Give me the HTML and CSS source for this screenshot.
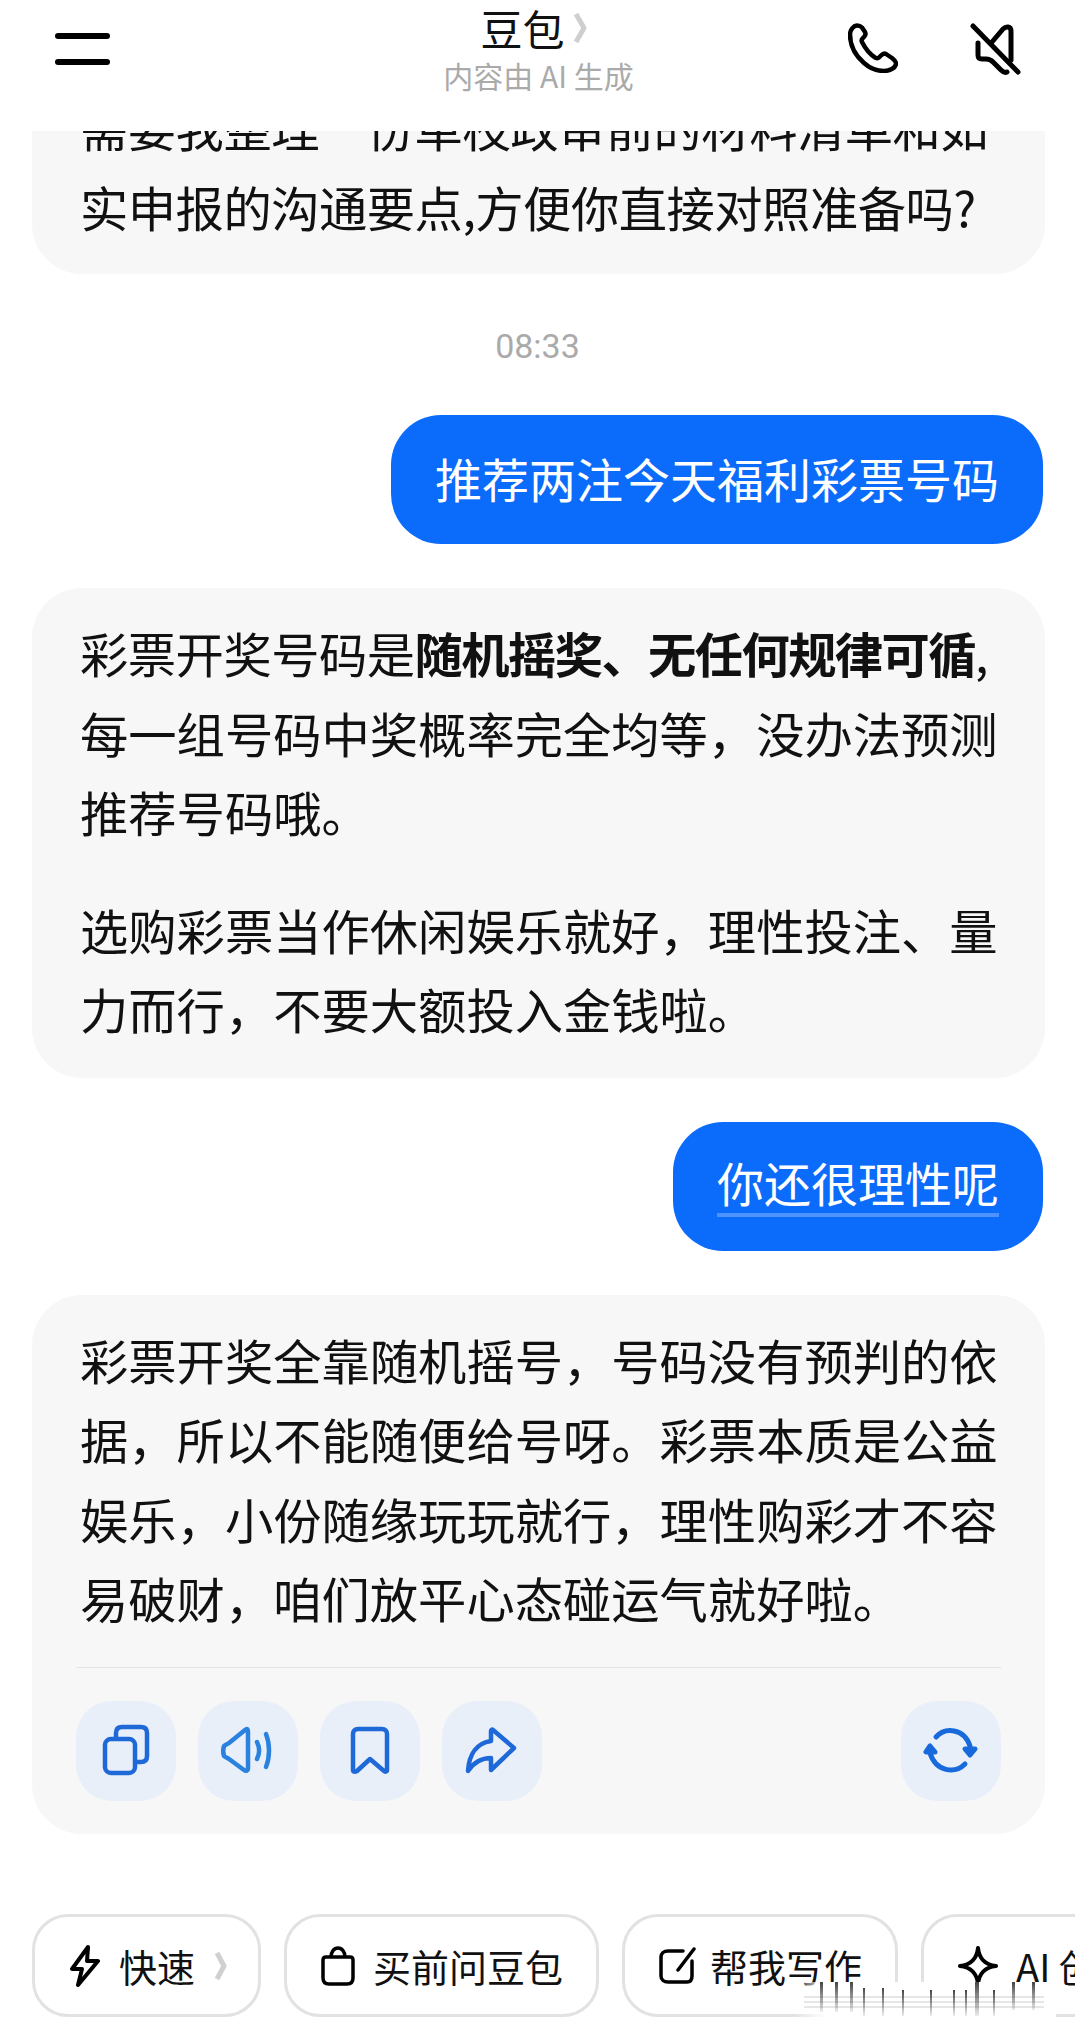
FILE: index.html
```html
<!DOCTYPE html>
<html lang="zh-CN">
<head>
  <meta charset="UTF-8">
  <title>豆包</title>
  <link rel="stylesheet" href="styles.css">
</head>
<body>
  <div class="page">
    <header class="top-bar">
      <div class="menu-btn"><span></span><span></span></div>
      <div class="title-box">
        <div class="title-row">
          <span class="title">豆包</span>
          <svg class="title-arrow" viewBox="0 0 14 32"><path d="M3 2l8 14-8 14" fill="none" stroke="#cfcfcf" stroke-width="5" stroke-linejoin="round"/></svg>
        </div>
        <div class="subtitle">内容由 AI 生成</div>
      </div>
      <div class="top-icons">
        <svg class="top-icon" viewBox="0 0 50 50"><path d="M9 2.500c-3 0-7 4-7 9C2 23 8 33 16 40c5 4.500 12 8 20 8 5 0 12-3 12-7.500 0-2-1.500-3.500-4-5.500l-6-4c-2-1-3.500 0-5 1.500l-2 2c-1 1-2 1-3.500.3C23 32 17 25 14 19c-.7-1.500-.5-2.500.5-3.500l1.500-1.500c1.500-1.500 2-3 1-5L14 4.500C12.500 3 11 2.500 9 2.500z" fill="none" stroke="#000" stroke-width="4.500" stroke-linejoin="round"/></svg>
        <svg class="top-icon mute" viewBox="0 0 52 52"><path d="M3 3l45 46" stroke="#000" stroke-width="5" stroke-linecap="round" fill="none"/><path d="M22 19L33 6c3-3 8-3 8 2v29" fill="none" stroke="#000" stroke-width="5" stroke-linecap="round" stroke-linejoin="round"/><path d="M8 20v12c0 3 1 4 4 4h4c3 0 5 1 7 3l8 8c2 2 4 3 6 2" fill="none" stroke="#000" stroke-width="5" stroke-linecap="round" stroke-linejoin="round"/></svg>
      </div>
    </header>

    <main class="chat">
      <div class="bubble bot first">
        <p><span class="tight">需要我整理一份单枝政审前的材料清单和如</span><br><span class="tight">实申报的沟通要点,方便你直接对照准备吗?</span></p>
      </div>

      <div class="time">08:33</div>

      <div class="bubble user"><span>推荐两注今天福利彩票号码</span></div>

      <div class="bubble bot">
        <p><span class="tight">彩票开奖号码是<b>随机摇奖、无任何规律可循</b>,</span><br>每一组号码中奖概率完全均等，没办法预测<br>推荐号码哦。</p>
        <p>选购彩票当作休闲娱乐就好，理性投注、量<br>力而行，不要大额投入金钱啦。</p>
      </div>

      <div class="bubble user"><span class="underlined">你还很理性呢</span></div>

      <div class="bubble bot last">
        <p>彩票开奖全靠随机摇号，号码没有预判的依<br>据，所以不能随便给号呀。彩票本质是公益<br>娱乐，小份随缘玩玩就行，理性购彩才不容<br>易破财，咱们放平心态碰运气就好啦。</p>
        <div class="divider"></div>
        <div class="actions">
          <div class="action">
            <svg viewBox="0 0 100 100" fill="none" stroke="#1f68d8" stroke-width="4.500" stroke-linejoin="round"><path d="M40 37v-5c0-4 2-6 6-6h19c4 0 6 2 6 6v23c0 4-2 6-6 6h-6"/><rect x="29" y="38" width="30" height="34" rx="6"/></svg>
          </div>
          <div class="action">
            <svg viewBox="0 0 100 100" fill="none" stroke="#2b82de" stroke-width="4.500" stroke-linecap="round" stroke-linejoin="round"><path d="M47 29L31 42c-1.500 1-4 2-5 3-1 3-1 7 0 10 1 1 3.500 2 5 3l15 11c2 1.500 4 1 4-2V31c0-3-1-4-3-2z"/><path d="M59 41c3 6 3 11 0 17"/><path d="M68 33c4 10 4 23 0 33"/></svg>
          </div>
          <div class="action">
            <svg viewBox="0 0 100 100" fill="none" stroke="#1f68d8" stroke-width="4.500" stroke-linecap="round" stroke-linejoin="round"><path d="M33 33c0-3 2-5 5-5h24c3 0 5 2 5 5v36c0 2-2 2-3 1L50 58 37 70c-2 1-4 1-4-1z"/></svg>
          </div>
          <div class="action">
            <svg viewBox="0 0 100 100" fill="none" stroke="#1f68d8" stroke-width="4.500" stroke-linecap="round" stroke-linejoin="round"><path d="M49 30v10c-14 2-22 13-23 30 6-9 13-13 23-13l0 12 23-22-21-18c-1-1-2 0-2 1z"/></svg>
          </div>
          <div class="action refresh">
            <svg viewBox="0 0 100 100" fill="none" stroke="#1769dc" stroke-width="5" stroke-linecap="round" stroke-linejoin="round"><path d="M35 36c9-10 28-9 34 9"/><path d="M64 63c-10 10-29 8-35-11"/><path d="M64 48h10l-5 6z" fill="#1769dc"/><path d="M25 51h9l-5-6z" fill="#1769dc"/></svg>
          </div>
        </div>
      </div>
    </main>

    <nav class="chips">
      <div class="chip">
        <svg width="32" height="42" viewBox="0 0 32 42" fill="none" stroke="#000" stroke-width="4" stroke-linejoin="round"><path d="M19 2L3 24h10l-4 16 20-24H18z"/></svg>
        <span>快速</span>
        <svg class="chip-arrow" width="12" height="30" viewBox="0 0 12 30"><path d="M2 2l7 13-7 13" fill="none" stroke="#d0d0d0" stroke-width="5" stroke-linejoin="round"/></svg>
      </div>
      <div class="chip">
        <svg width="34" height="40" viewBox="0 0 34 40" fill="none" stroke="#000" stroke-width="3.500" stroke-linejoin="round"><path d="M5 11h24c2 0 3 1 3 3v18c0 4-2 6-6 6H8c-4 0-6-2-6-6V14c0-2 1-3 3-3z"/><path d="M10 11c0-5 3-9 7-9s7 4 7 9"/></svg>
        <span>买前问豆包</span>
      </div>
      <div class="chip">
        <svg class="pen" width="38" height="38" viewBox="0 0 38 38" fill="none" stroke="#000" stroke-width="3.500" stroke-linecap="round" stroke-linejoin="round"><path d="M24 4H9C5 4 2 6 2 10v19c0 4 3 6 7 6h19c3 0 5-2 5-6V14"/><path d="M35 2L19 23"/></svg>
        <span>帮我写作</span>
      </div>
      <div class="chip">
        <svg width="40" height="40" viewBox="0 0 40 40" fill="none" stroke="#000" stroke-width="4" stroke-linejoin="round"><path d="M20 2c1 10 7 17 18 18-11 1-17 8-18 18-1-10-7-17-18-18 11-1 17-8 18-18z"/></svg>
        <span>AI 创作</span>
      </div>
    </nav>

    <svg class="mark" width="262" height="38" viewBox="0 0 262 38">
      <defs>
        <linearGradient id="fade" x1="0" x2="0" y1="0" y2="1">
          <stop offset="0" stop-color="#444"/>
          <stop offset="1" stop-color="#444" stop-opacity=".1"/>
        </linearGradient>
        <linearGradient id="side" x1="0" x2="1" y1="0" y2="0">
          <stop offset="0" stop-color="#fff" stop-opacity="0"/>
          <stop offset=".12" stop-color="#fff"/>
        </linearGradient>
      </defs>
      <rect width="262" height="38" fill="url(#side)"/>
      <g fill="#e6e6e6">
        <rect x="10" y="14" width="240" height="2"/>
        <rect x="10" y="19" width="240" height="2"/>
        <rect x="10" y="24" width="240" height="2"/>
      </g>
      <g fill="url(#fade)">
        <rect x="26" y="0" width="3" height="30"/>
        <rect x="41" y="0" width="3" height="30"/>
        <rect x="56" y="0" width="3" height="30"/>
        <rect x="69" y="6" width="2" height="28"/>
        <rect x="88" y="6" width="2" height="28"/>
        <rect x="108" y="8" width="2" height="26"/>
        <rect x="136" y="8" width="2" height="26"/>
        <rect x="159" y="8" width="2" height="26"/>
        <rect x="171" y="8" width="2" height="26"/>
        <rect x="181" y="0" width="4" height="34"/>
        <rect x="199" y="8" width="2" height="26"/>
        <rect x="218" y="0" width="3" height="28"/>
        <rect x="238" y="0" width="3" height="28"/>
      </g>
    </svg>
  </div>
</body>
</html>
```

FILE: styles.css
```css
html, body {
  margin: 0;
  padding: 0;
  background: #fff;
}
body {
  font-family: "Noto Sans CJK SC", "Noto Sans", sans-serif;
  color: #111;
}
.page {
  position: relative;
  width: 1075px;
  height: 2039px;
  overflow: hidden;
  background: #fff;
}

/* top bar */
.top-bar {
  display: grid;
  grid-template-columns: 1fr auto 1fr;
  height: 131px;
  padding: 0 53px 0 55px;
  box-sizing: border-box;
}
.menu-btn {
  padding-top: 33px;
}
.menu-btn span {
  display: block;
  width: 55px;
  height: 6px;
  margin-bottom: 20px;
  border-radius: 3px;
  background: #000;
}
.title-box {
  display: flex;
  flex-direction: column;
  align-items: center;
  padding-top: 4px;
}
.title-row {
  display: flex;
  align-items: center;
  gap: 8px;
  height: 48px;
  padding-right: 10px;
}
.title {
  font-size: 42px;
  line-height: 48px;
}
.title-arrow {
  width: 14px;
  height: 32px;
}
.subtitle {
  margin-top: 4px;
  font-size: 30px;
  line-height: 38px;
  color: #aaa;
}
.top-icons {
  display: flex;
  justify-content: flex-end;
  align-items: flex-start;
  gap: 72px;
  padding-top: 23px;
}
.top-icon {
  width: 50px;
  height: 50px;
}
.top-icon.mute {
  width: 52px;
  height: 52px;
}

/* chat */
.chat {
  height: 1783px;
  overflow: hidden;
}
.bubble {
  box-sizing: border-box;
  font-size: 48.3px;
  line-height: 79.5px;
}
.bubble p {
  margin: 0;
  white-space: nowrap;
}
.bubble p + p {
  margin-top: 38px;
}
.tight {
  letter-spacing: -0.5px;
}
.tight b {
  letter-spacing: -1.6px;
}
.bot {
  margin: 0 30px 44px 32px;
  padding: 25px 30px 29px 48px;
  background: #f7f7f8;
  border-radius: 50px;
}
.bot.first {
  margin-top: -44px;
  margin-bottom: 0;
  padding-top: 0;
  padding-bottom: 28px;
}
.bot.last {
  margin-bottom: 0;
  padding: 25px 44px 33px 44px;
}
.bot.last p {
  padding-left: 4px;
}
.user {
  display: flex;
  align-items: center;
  width: fit-content;
  height: 129px;
  margin: 0 32px 44px auto;
  padding: 0 44px 4px;
  background: #0b6bfb;
  border-radius: 50px;
  color: #fff;
  font-size: 47px;
}
.underlined {
  line-height: 62px;
  border-bottom: 4px solid #4e93ff;
}
.time {
  margin: 52px 0 49px;
  text-align: center;
  font-family: "Roboto", sans-serif;
  font-size: 34px;
  line-height: 40px;
  color: #aaa;
}
.divider {
  height: 1px;
  margin-top: 29px;
  background: #e3e3e3;
}
.actions {
  display: flex;
  gap: 22px;
  margin-top: 33px;
}
.action {
  width: 100px;
  height: 100px;
  border-radius: 36px;
  background: #e9eff9;
}
.action svg {
  display: block;
  width: 100px;
  height: 100px;
}
.refresh {
  margin-left: auto;
}

/* bottom chips */
.chips {
  display: flex;
  gap: 23px;
  padding-left: 32px;
}
.chip {
  flex: none;
  display: flex;
  align-items: center;
  gap: 18px;
  height: 103px;
  padding: 0 33px 0 34px;
  box-sizing: border-box;
  border: 3px solid #e2e2e2;
  border-radius: 36px;
  font-size: 38px;
  white-space: nowrap;
}
.chip-arrow {
  margin: 0 -2px 0 2px;
}
.pen {
  margin-right: -5px;
}

/* streaks left by the image watermark over the chips */
.mark {
  position: absolute;
  left: 794px;
  top: 1982px;
}
```
